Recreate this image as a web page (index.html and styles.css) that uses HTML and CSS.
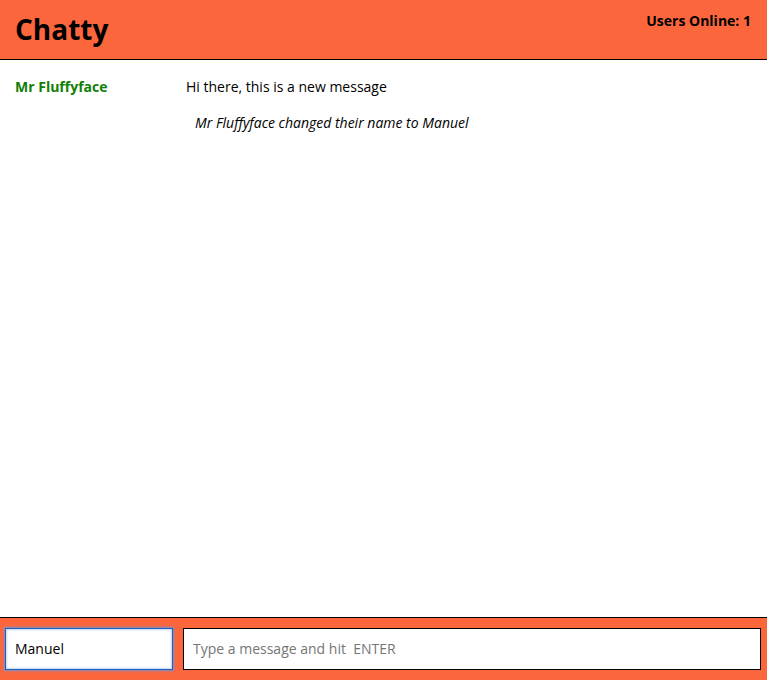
FILE: index.html
```html
<!DOCTYPE html>
<html lang="en">
<head>
<meta charset="utf-8">
<meta name="viewport" content="width=device-width, initial-scale=1">
<title>Chatty</title>
<link rel="stylesheet" href="styles.css">
</head>
<body>
<header class="navbar">
  <h1 class="brand">Chatty</h1>
  <p class="users">Users Online: 1</p>
</header>
<main class="messages">
  <div class="message">
    <span class="author">Mr Fluffyface</span>
    <span class="content">Hi there, this is a new message</span>
  </div>
  <div class="message system">
    <span class="notice">Mr Fluffyface changed their name to Manuel</span>
  </div>
</main>
<footer class="chatbar">
  <input class="field name" type="text" value="Manuel" aria-label="Your name">
  <input class="field text" type="text" placeholder="Type a message and hit  ENTER" aria-label="Message">
</footer>
</body>
</html>
```
FILE: styles.css
```css
* {
  box-sizing: border-box;
}

body {
  margin: 0;
  min-height: 100vh;
  display: flex;
  flex-direction: column;
  background: #fff;
  color: #000;
  font: 14px/20px "Open Sans", sans-serif;
}

.navbar {
  display: flex;
  justify-content: space-between;
  padding: 11px 16px 12px 15px;
  background: #fc663d;
  border-bottom: 1px solid #000;
}

.brand {
  margin: 0;
  font-size: 28px;
  line-height: 36px;
}

.users {
  margin: 0;
  font-weight: 700;
}

.messages {
  flex: 1;
  padding: 17px 15px;
}

.message {
  display: flex;
  margin-bottom: 16px;
}

.author {
  width: 171px;
  flex: none;
  color: #108004;
  font-weight: 700;
}

.system {
  padding-left: 180px;
  font-style: italic;
}

.chatbar {
  display: flex;
  gap: 10px;
  padding: 10px 6px 10px 5px;
  background: #fc663d;
  border-top: 1px solid #000;
}

.field {
  height: 42px;
  padding: 0 9px 2px;
  border: 1px solid #000;
  border-radius: 0;
  background: #fff;
  color: #000;
  font: inherit;
}

.field::placeholder {
  color: #757575;
}

.name {
  width: 168px;
  border: 1px solid #2060b8;
  box-shadow: 0 0 2px 1px #7f8fc8, inset 0 0 2px 1px #bcd6fa;
}

.text {
  flex: 1;
  min-width: 0;
}
```
